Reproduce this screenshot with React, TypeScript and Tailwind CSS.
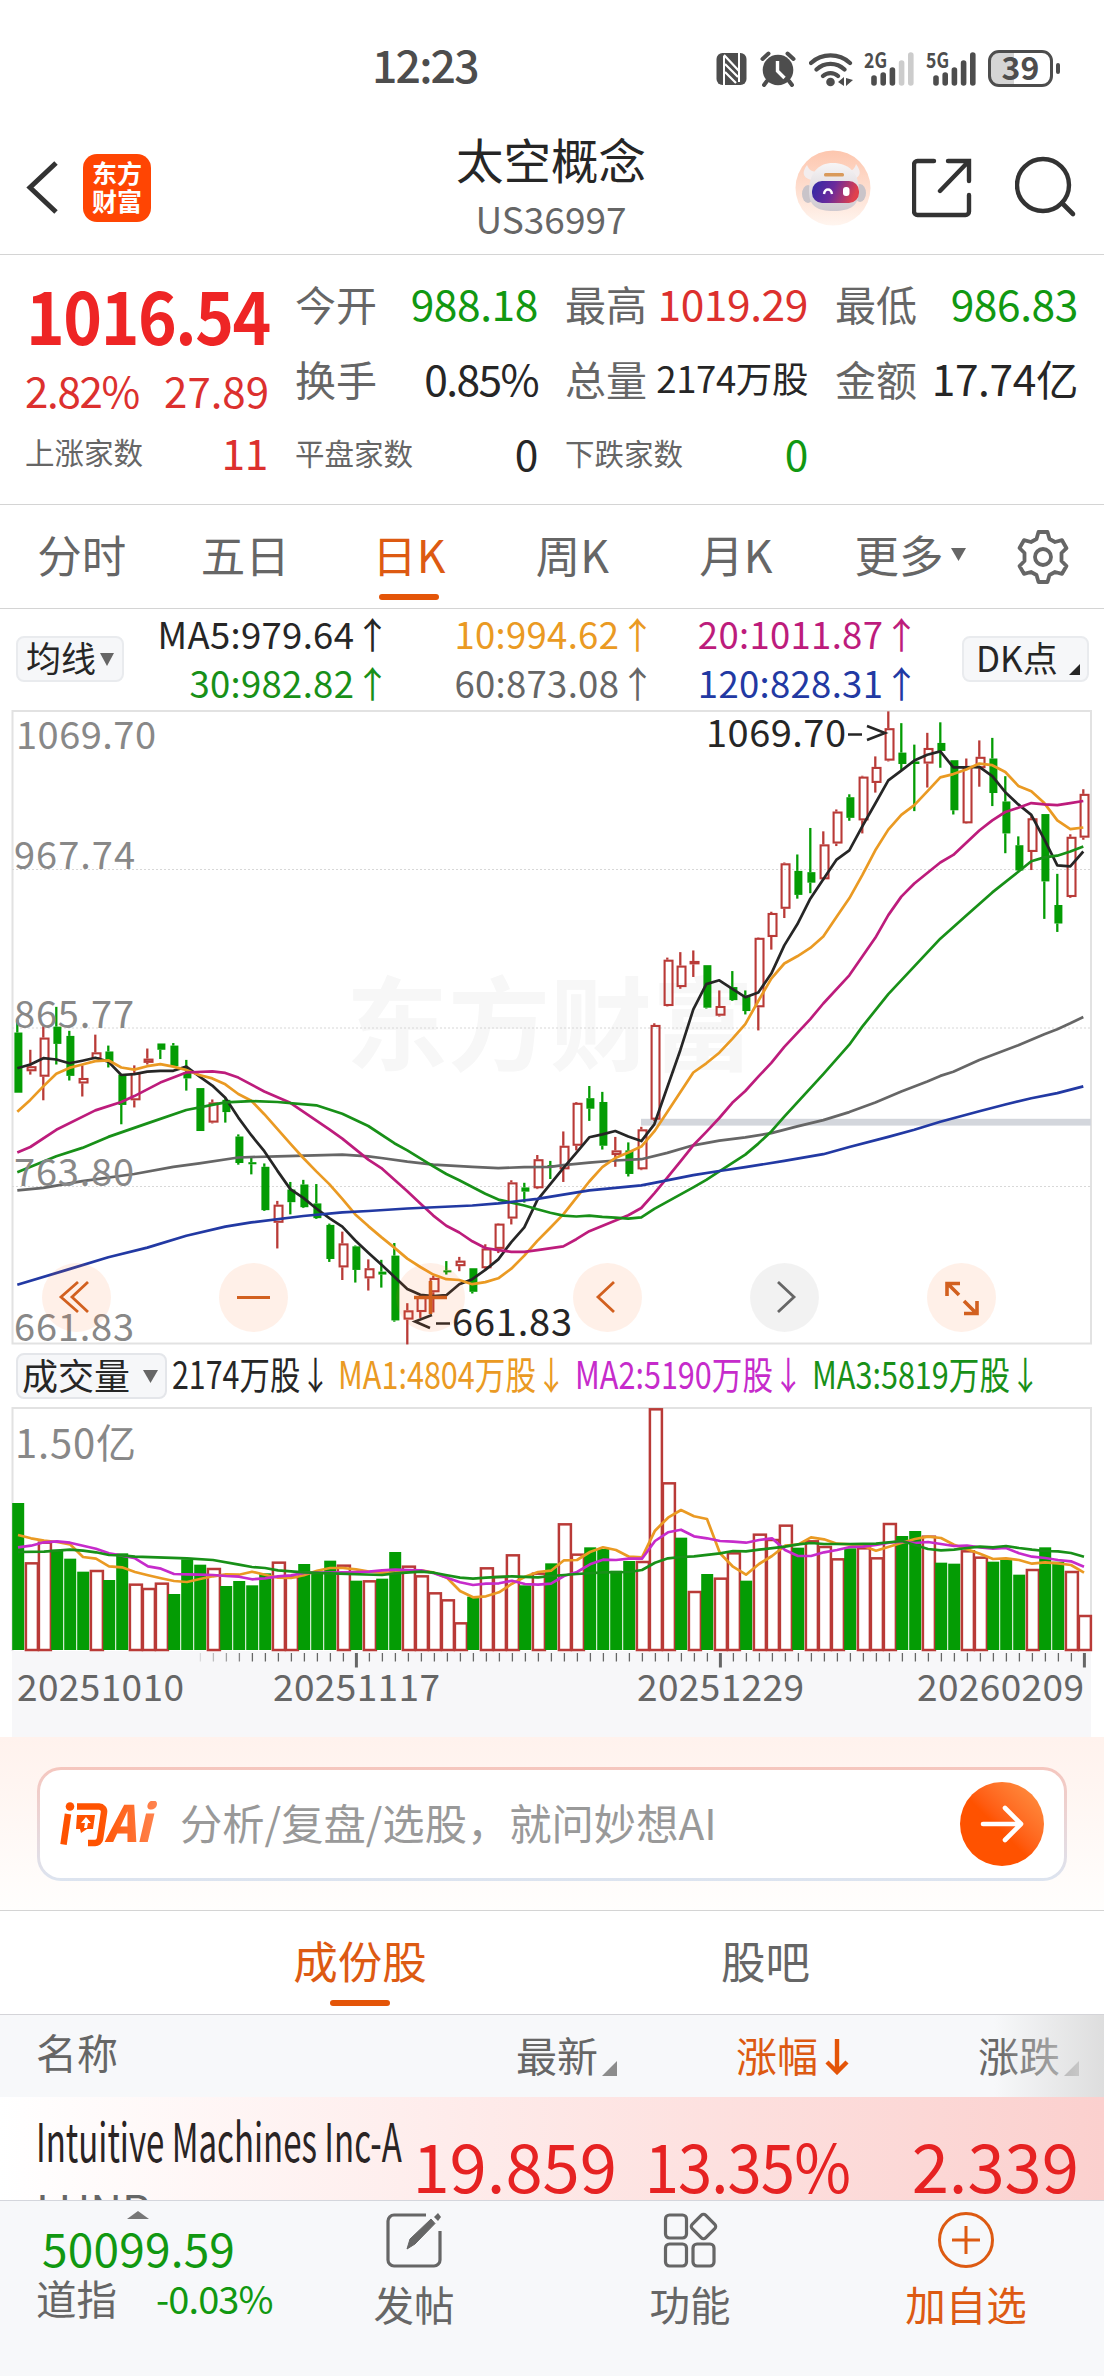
import React from 'react';

// --- Types ---
// [up?, high, body top, body bottom, low], measured on a 1568 unit tall grid
type Candle = [number, number, number, number, number];
type Point = [number, number];

// --- Data ---
const candles: Candle[] = [
  [0, 760, 790, 933, 933], [1, 831, 870, 882, 890], [1, 775, 802, 895, 951], [0, 729, 776, 817, 866],
  [0, 786, 798, 893, 904], [1, 868, 898, 911, 942], [1, 795, 837, 853, 853], [0, 821, 835, 860, 873],
  [0, 890, 890, 962, 1008], [1, 868, 886, 951, 968], [1, 828, 852, 862, 866], [0, 816, 816, 831, 853],
  [0, 815, 821, 870, 870], [0, 855, 885, 899, 928], [0, 922, 922, 1024, 1024], [1, 949, 956, 1004, 1006],
  [0, 945, 950, 979, 1004], [0, 1032, 1037, 1100, 1104], [0, 1087, 1098, 1103, 1127], [0, 1101, 1109, 1212, 1214],
  [1, 1190, 1199, 1242, 1303], [0, 1145, 1163, 1193, 1222], [0, 1140, 1151, 1205, 1207], [0, 1150, 1196, 1231, 1233],
  [0, 1244, 1247, 1328, 1335], [1, 1263, 1291, 1348, 1378], [0, 1296, 1298, 1354, 1384], [1, 1329, 1350, 1374, 1403],
  [0, 1330, 1358, 1365, 1396], [0, 1290, 1320, 1474, 1477], [1, 1433, 1450, 1472, 1531], [1, 1412, 1418, 1454, 1468],
  [1, 1368, 1373, 1407, 1455], [0, 1333, 1355, 1359, 1365], [1, 1323, 1332, 1345, 1357], [0, 1350, 1350, 1406, 1410],
  [1, 1293, 1303, 1350, 1354], [1, 1243, 1244, 1304, 1314], [1, 1141, 1146, 1232, 1246], [0, 1147, 1158, 1168, 1194],
  [1, 1081, 1091, 1160, 1162], [0, 1095, 1105, 1108, 1138], [1, 1025, 1059, 1115, 1145], [1, 955, 957, 1059, 1070],
  [0, 917, 946, 971, 1000], [0, 931, 955, 1059, 1068], [1, 1038, 1070, 1081, 1109], [0, 1051, 1070, 1126, 1132],
  [1, 1014, 1020, 1115, 1117], [1, 768, 772, 997, 1000], [1, 612, 617, 727, 728], [1, 599, 631, 682, 686],
  [1, 595, 620, 628, 658], [0, 630, 630, 731, 733], [1, 690, 727, 750, 752], [0, 644, 682, 713, 715],
  [0, 690, 702, 739, 747], [1, 564, 565, 730, 785], [1, 503, 506, 563, 593], [1, 386, 388, 496, 518],
  [0, 367, 406, 463, 472], [0, 304, 409, 434, 459], [1, 312, 343, 426, 428], [1, 260, 265, 341, 347],
  [0, 224, 231, 280, 287], [1, 180, 182, 286, 317], [1, 134, 159, 197, 220], [1, 27, 67, 144, 146],
  [0, 55, 125, 152, 166], [0, 106, 146, 152, 264], [1, 78, 114, 151, 208], [0, 53, 102, 121, 161],
  [0, 143, 143, 262, 272], [1, 139, 158, 293, 294], [1, 96, 135, 162, 206], [0, 90, 139, 221, 252],
  [0, 181, 241, 317, 364], [0, 324, 345, 405, 406], [1, 276, 281, 361, 404], [0, 271, 271, 431, 520],
  [0, 413, 487, 531, 551], [1, 319, 325, 468, 470], [1, 212, 223, 327, 332],
];

const ma5 = [
  875, 866, 851, 854, 863, 857, 850, 859, 891, 889, 883, 881, 881, 871, 894, 916, 945, 992, 1034, 1072, 1118,
  1162, 1183, 1208, 1231, 1251, 1284, 1313, 1341, 1370, 1399, 1413, 1416, 1414, 1388, 1376, 1354, 1329, 1288,
  1253, 1188, 1150, 1112, 1076, 1039, 1032, 1024, 1037, 1048, 1008, 920, 832, 735, 675, 666, 686, 706, 695, 650,
  583, 533, 472, 426, 380, 357, 300, 246, 191, 168, 144, 130, 122, 160, 160, 159, 181, 219, 248, 273, 331, 393,
  395, 360,
];
const ma10 = [
  978, 950, 918, 888, 874, 866, 858, 856, 873, 878, 870, 865, 871, 879, 891, 899, 913, 936, 952, 984, 1019, 1054,
  1088, 1120, 1150, 1185, 1222, 1250, 1276, 1301, 1327, 1347, 1365, 1376, 1378, 1388, 1383, 1374, 1351, 1320,
  1285, 1254, 1222, 1183, 1144, 1110, 1088, 1075, 1061, 1025, 979, 932, 885, 863, 838, 805, 770, 715, 662, 626,
  609, 589, 562, 516, 471, 416, 357, 308, 273, 250, 217, 184, 176, 165, 151, 155, 171, 204, 217, 245, 286, 307,
  303,
];
const ma20: Point[] = [
  [0, 1075], [1, 1062], [3, 1021], [6, 975], [8, 955], [9, 941], [11, 909], [13, 885], [15, 882], [16, 886],
  [17, 897], [19, 930], [21, 957], [24, 1020], [25, 1042], [27, 1092], [28, 1112], [30, 1167], [31, 1196],
  [32, 1225], [33, 1249], [34, 1265], [35, 1286], [36, 1302], [37, 1307], [38, 1311], [39, 1311], [40, 1307],
  [42, 1298], [43, 1281], [44, 1262], [47, 1224], [48, 1207], [49, 1172], [50, 1135], [51, 1097], [52, 1058],
  [53, 1026], [54, 993], [55, 957], [56, 929], [57, 895], [58, 862], [59, 824], [61, 758], [62, 721], [64, 654],
  [66, 565], [67, 511], [68, 467], [69, 436], [71, 386], [72, 368], [73, 339], [74, 310], [75, 286], [76, 266],
  [77, 256], [78, 245], [79, 248], [80, 250], [81, 245], [82, 240],
];
const ma30: Point[] = [
  [0, 1122], [3, 1084], [5, 1064], [7, 1038], [10, 1006], [13, 974], [15, 962], [16, 956], [18, 953], [20, 955],
  [23, 963], [25, 983], [27, 1012], [29, 1053], [30, 1070], [32, 1108], [33, 1126], [34, 1141], [36, 1173],
  [37, 1187], [39, 1201], [40, 1210], [41, 1218], [42, 1225], [43, 1227], [44, 1225], [45, 1228], [46, 1230],
  [47, 1232], [48, 1229], [49, 1209], [52, 1158], [53, 1140], [54, 1120], [56, 1080], [57, 1054], [58, 1025],
  [59, 990], [62, 889], [64, 819], [65, 776], [67, 699], [69, 633], [71, 567], [73, 512], [75, 457], [77, 408],
  [78, 383], [79, 374], [80, 370], [81, 360], [82, 348],
];
const ma60: Point[] = [
  [0, 1165], [2, 1159], [5, 1143], [9, 1126], [12, 1109], [14, 1101], [17, 1087], [20, 1084], [25, 1080],
  [27, 1084], [28, 1088], [30, 1097], [32, 1104], [35, 1109], [37, 1112], [39, 1110], [41, 1109], [42, 1105],
  [44, 1099], [46, 1094], [48, 1091], [50, 1076], [52, 1058], [54, 1047], [56, 1039], [58, 1029], [60, 1013],
  [62, 998], [64, 979], [66, 956], [68, 930], [70, 906], [71, 893], [72, 883], [74, 855], [77, 820], [79, 794],
  [80, 782], [81, 768], [82, 753],
];
const ma120: Point[] = [
  [0, 1389], [4, 1352], [7, 1324], [10, 1301], [13, 1273], [16, 1251], [18, 1241], [22, 1226], [25, 1217],
  [27, 1214], [30, 1208], [35, 1201], [37, 1196], [40, 1185], [44, 1165], [48, 1153], [49, 1147], [52, 1129],
  [54, 1119], [56, 1110], [59, 1095], [62, 1079], [64, 1062], [67, 1038], [69, 1021], [71, 1002], [74, 977],
  [76, 961], [78, 946], [80, 934], [82, 918],
];

// [up?, bar top]
const volumes: Point[] = [
  [0, 489], [1, 667], [1, 605], [0, 629], [0, 656], [0, 695], [1, 690], [0, 720], [0, 640], [1, 731], [1, 744],
  [1, 728], [0, 762], [0, 658], [0, 674], [1, 684], [0, 738], [0, 723], [0, 736], [0, 700], [1, 665], [1, 708],
  [0, 672], [0, 698], [0, 662], [1, 674], [0, 722], [1, 721], [0, 716], [0, 636], [1, 677], [1, 706], [1, 757],
  [1, 778], [1, 847], [0, 770], [1, 682], [1, 708], [1, 643], [0, 736], [1, 698], [0, 670], [1, 550], [1, 641],
  [0, 622], [0, 627], [0, 692], [0, 663], [1, 663], [1, 205], [1, 427], [0, 593], [1, 753], [0, 702], [1, 713],
  [1, 637], [0, 722], [1, 581], [1, 597], [1, 554], [0, 623], [1, 601], [1, 618], [1, 655], [0, 625], [1, 622],
  [1, 652], [1, 549], [0, 588], [0, 573], [1, 587], [0, 668], [0, 671], [1, 631], [1, 650], [0, 665], [0, 659],
  [0, 704], [1, 687], [0, 622], [0, 665], [1, 693], [1, 825],
];
const vma1 = [
  585, 595, 602, 606, 613, 651, 656, 679, 682, 696, 706, 715, 723, 726, 717, 709, 703, 704, 695, 704, 713, 714,
  706, 692, 684, 684, 688, 695, 698, 697, 693, 691, 698, 713, 753, 772, 769, 757, 731, 710, 696, 692, 661, 660,
  636, 622, 630, 650, 652, 572, 533, 510, 529, 537, 640, 680, 704, 672, 648, 617, 614, 592, 598, 611, 613, 617,
  632, 620, 608, 597, 590, 594, 614, 628, 641, 657, 655, 660, 671, 667, 670, 675, 698,
];
const vma2 = [
  622, 617, 607, 604, 608, 617, 626, 640, 647, 655, 679, 686, 702, 703, 704, 705, 708, 710, 718, 715, 709, 706,
  699, 698, 698, 697, 696, 695, 691, 689, 690, 691, 700, 713, 727, 735, 731, 730, 722, 732, 734, 731, 708, 696,
  673, 659, 660, 656, 656, 603, 577, 569, 589, 595, 603, 605, 608, 600, 595, 630, 648, 648, 637, 630, 621, 620,
  615, 608, 605, 609, 606, 612, 618, 617, 622, 626, 624, 640, 650, 654, 660, 664, 680,
];
const vma3: Point[] = [
  [0, 636], [2, 635], [4, 629], [5, 632], [6, 637], [7, 645], [8, 646], [9, 650], [13, 655], [15, 660], [17, 674],
  [18, 681], [19, 684], [20, 691], [22, 697], [24, 700], [28, 705], [29, 700], [31, 695], [32, 698], [33, 706],
  [34, 713], [35, 716], [36, 713], [38, 709], [40, 712], [41, 708], [43, 702], [45, 697], [47, 696], [48, 690],
  [49, 668], [50, 655], [51, 651], [52, 649], [54, 640], [55, 633], [56, 634], [57, 629], [59, 620], [60, 613],
  [61, 609], [62, 612], [64, 612], [66, 611], [68, 603], [69, 615], [70, 627], [71, 631], [72, 629], [73, 624],
  [74, 620], [75, 622], [76, 618], [77, 624], [78, 629], [79, 633], [80, 634], [81, 639], [82, 650],
];

const RED = '#b93a37';
const GREEN = '#049c04';
const STEP = 13;

const priceY = (v: number) => (v * 660) / 1568;
const volumeY = (v: number) => v / 3;

const toPoints = (list: number[]): Point[] => list.map((v, i) => [i, v]);
const line = (pts: Point[], x0: number, y: (v: number) => number) =>
  pts.map(([i, v]) => `${x0 + i * STEP},${y(v).toFixed(1)}`).join(' ');

const priceLines = [
  { pts: ma60, color: '#666666' },
  { pts: toPoints(ma5), color: '#262626' },
  { pts: toPoints(ma10), color: '#ea9a23' },
  { pts: ma20, color: '#bd1c7c' },
  { pts: ma30, color: '#189018' },
  { pts: ma120, color: '#2239a3' },
];

// --- Status bar ---

const Signal: React.FC<{ label: string; strong: number }> = ({ label, strong }) => (
  <svg className="overflow-visible" width="51" height="36" viewBox="0 0 51 36">
    <text x="0" y="17" fontSize="21" fontWeight="700" fill="#4d4d4d" textLength="23" lengthAdjust="spacingAndGlyphs">{label}</text>
    {[24, 21, 16, 9, 1].map((y, i) => (
      <line key={i} x1={10 + i * 9.2} x2={10 + i * 9.2} y1={y + 3} y2="32" stroke={i < strong ? '#4d4d4d' : '#cccccc'} strokeWidth="5.6" strokeLinecap="round" />
    ))}
  </svg>
);

const StatusBar = () => (
  <div className="flex h-[137px] items-center text-[#4d4d4d]">
    <div className="ml-[372px] w-[344px] -mt-[8px] text-[44.5px] leading-none font-medium tracking-[-1.8px]">12:23</div>
    <div className="flex items-center">
      {/* NFC */}
      <svg className="mr-[12px]" width="32" height="34" viewBox="0 0 32 34">
        <rect x="0.5" y="1" width="30" height="32" rx="6" fill="#4d4d4d" />
        <path d="M8 4v29M23 1v29" stroke="#fff" strokeWidth="2" />
        <path d="M8 3L23 19M9 12L22 25M9 20L20 31" stroke="#fff" strokeWidth="2.200" />
      </svg>
      {/* Alarm */}
      <svg className="mr-[12px]" width="37" height="36" viewBox="0 0 37 36">
        <circle cx="18" cy="19" r="15.3" fill="#4d4d4d" />
        <path d="M2.500 8l6-5.500M33.500 8l-6-5.500M7 30l-3 4M29 30l3 4" stroke="#4d4d4d" strokeWidth="4" strokeLinecap="round" />
        <path d="M17.500 10v10l7 7" fill="none" stroke="#fff" strokeWidth="3.400" />
      </svg>
      {/* Wifi */}
      <svg className="mr-[10px]" width="45" height="36" viewBox="0 0 45 36">
        <path d="M2 12a29 29 0 0 1 39 0M7.500 18.500a20 20 0 0 1 28 0M14 25a11 11 0 0 1 15 0" fill="none" stroke="#4d4d4d" strokeWidth="4.200" strokeLinecap="round" />
        <circle cx="21.500" cy="31" r="4.300" fill="#4d4d4d" />
        <path d="M29 31l6-5v9zM37 27v8l7-6z" fill="#4d4d4d" />
      </svg>
      <div className="mr-[11px]"><Signal label="2G" strong={3} /></div>
      <div className="mr-[11px]"><Signal label="5G" strong={5} /></div>
      <div className="flex h-[37px] w-[65px] items-center justify-center rounded-[11px] border-[3px] border-[#4d4d4d] bg-linear-to-r from-[#d5d5d5] from-39% to-white to-39%">
        <span className="-mt-[5px] text-[32px] leading-none font-bold">39</span>
      </div>
      <div className="ml-[3px] h-[11px] w-[4px] rounded-full bg-[#4d4d4d]" />
    </div>
  </div>
);

// --- Header ---

const Robot = () => (
  <svg width="76" height="76" viewBox="0 0 76 76">
    <defs>
      <linearGradient id="halo" x1="0" y1="0" x2="0" y2="1">
        <stop offset="0" stopColor="#fdc6ae" />
        <stop offset="1" stopColor="#fff5ef" />
      </linearGradient>
      <linearGradient id="visor" x1="0" y1="0" x2="1" y2="0.2">
        <stop offset="0" stopColor="#2f2aa6" />
        <stop offset="0.5" stopColor="#6a2a9c" />
        <stop offset="1" stopColor="#e0404c" />
      </linearGradient>
      <linearGradient id="shell" x1="0" y1="0" x2="0" y2="1">
        <stop offset="0" stopColor="#f7f5f6" />
        <stop offset="1" stopColor="#cfc9cf" />
      </linearGradient>
    </defs>
    <circle cx="38" cy="38" r="37.5" fill="url(#halo)" />
    <path d="M12 15c-5 7-5 12 4 15l7-8c-6 0-9-2-11-7zM61 14c5 7 6 12-3 16l-8-8c6 0 10-3 11-8z" fill="#f3edee" />
    <ellipse cx="13" cy="44" rx="6" ry="9" fill="#c9c4c9" />
    <ellipse cx="65" cy="43" rx="6" ry="9" fill="#c9c4c9" />
    <path d="M14 42c0-19 9-29 24-29s26 9 26 28c0 14-8 20-25 20S14 56 14 42z" fill="url(#shell)" />
    <rect x="17" y="31" width="47" height="22" rx="10" fill="url(#visor)" />
    <rect x="29" y="23" width="20" height="3.500" rx="1.500" fill="#d99a5b" />
    <path d="M29 44c1-6 7-6 8 0" fill="none" stroke="#fff" strokeWidth="2.400" />
    <rect x="48" y="37" width="6.500" height="9" rx="3" fill="#fff" />
  </svg>
);

const Header = () => (
  <div className="flex h-[118px] items-start border-b border-[#d4d4d4]">
    <svg className="mt-[22px] ml-[26px]" width="33" height="58" viewBox="0 0 33 58">
      <path d="M30 4L4 28.500L30 53" fill="none" stroke="#333" strokeWidth="5" />
    </svg>
    <div className="mt-[17px] ml-[24px] flex h-[68px] w-[68px] flex-col items-center justify-center rounded-[14px] bg-[#ff4503] text-[25px] leading-[28px] font-bold text-white">
      <span className="-mt-[4px]">东方</span>
      <span>财富</span>
    </div>
    <div className="ml-[250px] flex w-[300px] flex-col items-center">
      <div className="-mt-[1px] text-[47.500px] leading-[46px] text-[#262626]">太空概念</div>
      <div className="mt-[18px] text-[37px] leading-[37px] text-[#666]">US36997</div>
    </div>
    <div className="mt-[13px] ml-[94px]"><Robot /></div>
    <svg className="mt-[21px] ml-[41px]" width="60" height="60" viewBox="0 0 60 60">
      <path d="M22 3H5.500A3.500 3.500 0 0 0 2 6.500v47A3.500 3.500 0 0 0 5.500 57h48a3.500 3.500 0 0 0 3.500-3.500V37M36 3h21v20M56 4L28 33" fill="none" stroke="#333" strokeWidth="4.400" strokeLinecap="round" />
    </svg>
    <svg className="mt-[19px] ml-[43px]" width="62" height="62" viewBox="0 0 62 62">
      <circle cx="28" cy="29" r="26" fill="none" stroke="#333" strokeWidth="4.400" />
      <path d="M47 47L58 58" stroke="#333" strokeWidth="4.600" strokeLinecap="round" />
    </svg>
  </div>
);

// --- Quote panel ---

const Cell: React.FC<{ label: string; value: string; color: string; small?: boolean; tight?: boolean }> = ({
  label,
  value,
  color,
  small,
  tight,
}) => (
  <div className="flex h-[50px] w-[243px] items-center justify-between whitespace-nowrap">
    <span className={`text-[#666] ${small ? 'text-[29.500px]' : 'text-[41px]'} leading-none`}>{label}</span>
    <span className={`${color} ${tight ? 'text-[36.500px]' : 'text-[42.500px]'} leading-none ${value.endsWith('%') ? 'tracking-[-1.6px]' : 'tracking-[-0.4px]'}`}>{value}</span>
  </div>
);

const QuotePanel = () => (
  <div className="flex h-[250px] border-b border-[#d4d4d4] pl-[25px]">
    <div className="w-[244px] text-[#dc302e]">
      <div className="mt-[22px] ml-[1px] w-max origin-left scale-x-[0.9] text-[73px] leading-[72px] font-bold tracking-[-1.6px] text-[#ee2525]">1016.54</div>
      <div className="mt-[20px] flex justify-between text-[42px] leading-[42px]">
        <span className="tracking-[-1.3px]">2.82%</span>
        <span>27.89</span>
      </div>
      <div className="mt-[16px]"><Cell label="上涨家数" value="11" color="text-[#dc302e]" small /></div>
    </div>
    <div className="ml-[26px] grid grid-cols-[243px_243px_243px] gap-x-[27px] content-start pt-[23px]">
      <Cell label="今开" value="988.18" color="text-[#119811]" />
      <Cell label="最高" value="1019.29" color="text-[#dc302e]" />
      <Cell label="最低" value="986.83" color="text-[#119811]" />
      <div className="mt-[25px]"><Cell label="换手" value="0.85%" color="text-[#262626]" /></div>
      <div className="mt-[25px]"><Cell label="总量" value="2174万股" color="text-[#262626]" tight /></div>
      <div className="mt-[25px]"><Cell label="金额" value="17.74亿" color="text-[#262626]" /></div>
      <div className="mt-[25px]"><Cell label="平盘家数" value="0" color="text-[#262626]" small /></div>
      <div className="mt-[25px]"><Cell label="下跌家数" value="0" color="text-[#119811]" small /></div>
    </div>
  </div>
);

// --- Period tabs ---

const periods = ['分时', '五日', '日K', '周K', '月K'];

const PeriodTabs = () => (
  <div className="flex h-[104px] items-start border-b border-[#d4d4d4] text-[44.500px] leading-[44px] text-[#666]">
    {periods.map((p) => (
      <div key={p} className={`flex w-[163.500px] flex-col items-center pt-[27px] ${p === '日K' ? 'text-[#dd5a12]' : ''}`}>
        <span>{p}</span>
        {p === '日K' && <span className="mt-[18px] h-[6px] w-[60px] rounded-[3px] bg-[#e45508]" />}
      </div>
    ))}
    <div className="flex w-[150px] items-center pt-[27px] pl-[37px] whitespace-nowrap">
      更多
      <svg className="ml-[7px]" width="15" height="13" viewBox="0 0 15 13"><path d="M0 0h15L7.500 13z" fill="#666" /></svg>
    </div>
    <svg className="mt-[25px] ml-[49px]" width="52" height="54" viewBox="0 0 52 54">
      <path
        d="M21.500 2h9l2 7 5.500 3 7-1.800 4.500 8L44.500 23v8l5 5-4.500 7.800-7-1.800-5.500 3-2 7h-9l-2-7-5.500-3-7 1.800L2.500 36l5-5v-8l-5-5 4.500-7.800 7 1.800 5.500-3z"
        fill="none"
        stroke="#666"
        strokeWidth="3.800"
        strokeLinejoin="round"
      />
      <circle cx="26" cy="27" r="8" fill="none" stroke="#666" strokeWidth="3.800" />
    </svg>
  </div>
);

// --- MA legend ---

const MaLegend = () => (
  <div className="flex h-[99px]">
    <div className="mt-[27px] ml-[16px] flex h-[46px] w-[108px] items-center rounded-[8px] border-2 border-[#e9ebee] bg-[#f6f7f9] pl-[8px] text-[35px] leading-[35px] whitespace-nowrap text-[#262626]">
      <span className="-mt-[5px]">均线</span>
      <svg className="ml-[4px]" width="14" height="14" viewBox="0 0 14 14"><path d="M0 1h14L7 14z" fill="#666" /></svg>
    </div>
    <div className="grid grid-cols-[267px_265px_264px] content-start pt-[6px] text-right text-[36.500px] leading-[49px] tracking-[0.3px] whitespace-nowrap">
      <span className="-mt-[6px] text-[#262626]">MA5:979.64↑</span>
      <span className="-mt-[6px] text-[#ea9a23]">10:994.62↑</span>
      <span className="-mt-[6px] text-[#bd1c7c]">20:1011.87↑</span>
      <span className="text-[#189018]">30:982.82↑</span>
      <span className="text-[#666]">60:873.08↑</span>
      <span className="text-[#2239a3]">120:828.31↑</span>
    </div>
    <div className="mt-[27px] ml-[42px] flex h-[46px] w-[127px] items-center rounded-[8px] border-2 border-[#e9ebee] bg-[#f6f7f9] pl-[12px] text-[35px] leading-[35px] whitespace-nowrap text-[#262626]">
      <span className="-mt-[5px]">DK点</span>
      <svg className="mt-[20px] ml-[11px] shrink-0" width="11" height="11" viewBox="0 0 11 11"><path d="M11 0v11H0z" fill="#262626" /></svg>
    </div>
  </div>
);

// --- Price chart ---

const tools = [
  <path key="rewind" d="M36 19L19 34l17 15M46 19L30 34l16 15" />,
  <path key="minus" d="M18 34.500h33" />,
  <path key="plus" d="M18 34.500h33M34.500 18v33" strokeWidth="3.600" />,
  <path key="prev" d="M41 19L25 34l16 15" />,
  <path key="next" d="M28 19l16 15-16 15" />,
  <path key="expand" d="M20 33V20.500h13M21 21l11 11M37 38l12 12M50 38v12.500H37" strokeWidth="3.600" />,
];

const PriceChart = () => (
  <div className="relative h-[640px]">
    <svg className="block" width="1104" height="640" viewBox="0 8 1104 640">
      <g fill="#f7f7f7" fontSize="102" fontWeight="700">
        <text x="346" y="363" textLength="408">东方财富</text>
      </g>
      <rect x="12.500" y="11" width="1078.500" height="632.500" fill="none" stroke="#e2e2e2" strokeWidth="2" />
      {[169.5, 328, 486.5].map((y) => (
        <line key={y} x1="12" x2="1091" y1={y} y2={y} stroke="#d8d8d8" strokeWidth="1.200" strokeDasharray="2 2" />
      ))}
      <rect x="641" y="418.800" width="450" height="6.800" fill="#d3d6dc" />
      {candles.map(([up, high, top, bottom, low], i) => {
        const x = 17.3 + i * STEP;
        const color = up ? RED : GREEN;
        const h = Math.max(priceY(bottom - top), 2);
        return (
          <g key={i}>
            <line x1={x} x2={x} y1={priceY(high)} y2={priceY(top)} stroke={color} strokeWidth="2.300" />
            <line x1={x} x2={x} y1={priceY(bottom)} y2={priceY(low)} stroke={color} strokeWidth="2.300" />
            {up ? (
              <rect x={x - 2.7} y={priceY(top) + 1} width="7.900" height={Math.max(h - 2, 1)} fill="none" stroke={RED} strokeWidth="2.100" />
            ) : (
              <rect x={x - 2.9} y={priceY(top)} width="8" height={h} fill={GREEN} />
            )}
          </g>
        );
      })}
      {priceLines.map((l) => (
        <polyline key={l.color} points={line(l.pts, 17.3, priceY)} fill="none" stroke={l.color} strokeWidth="2.700" strokeLinejoin="round" />
      ))}
      <g fill="#888888" fontSize="38">
        <text x="16" y="49" textLength="140">1069.70</text>
        <text x="14" y="169" textLength="121">967.74</text>
        <text x="14" y="328" textLength="120">865.77</text>
        <text x="14" y="486" textLength="120">763.80</text>
        <text x="14" y="641" textLength="120">661.83</text>
      </g>
      <g fill="#262626" fontSize="38">
        <text x="706" y="47" textLength="140">1069.70</text>
        <path d="M848 34.500h14M867 26l18 7-18 7M430 628l-15-6.500 17-6.500M436 623.500h14" fill="none" stroke="#262626" strokeWidth="2.600" />
        <text x="452" y="635.500" textLength="120">661.83</text>
      </g>
    </svg>
    <div className="absolute top-[555px] left-[42px] flex gap-[108.100px]">
      {tools.map((icon, i) => (
        <svg
          key={i}
          className={`h-[69px] w-[69px] rounded-full ${i === 4 ? 'bg-black/5' : 'bg-[#fb6a20]/10'}`}
          viewBox="0 0 69 69"
          fill="none"
          stroke={i === 4 ? '#666666' : '#d2601f'}
          strokeWidth="2.800"
        >
          {icon}
        </svg>
      ))}
    </div>
  </div>
);

// --- Volume ---

const volumeLegend = [
  { text: 'MA1:4804万股↓', color: 'text-[#ea9a23]' },
  { text: 'MA2:5190万股↓', color: 'text-[#c62bcb]' },
  { text: 'MA3:5819万股↓', color: 'text-[#189018]' },
];

const VolumeLegend = () => (
  <div className="flex h-[56px] items-start text-[38px] leading-[38px] whitespace-nowrap">
    <div className="mt-[5px] ml-[16px] flex h-[46px] w-[151px] items-center rounded-[8px] border-2 border-[#e4e6ea] bg-[#f6f7f9] pl-[4px] text-[36px] leading-[36px] text-[#262626]">
      <span className="-mt-[5px]">成交量</span>
      <svg className="ml-[13px]" width="15" height="13" viewBox="0 0 15 13"><path d="M0 0h15L7.500 13z" fill="#666" /></svg>
    </div>
    <div className="mt-[6px] ml-[5px] w-[166px]">
      <span className="inline-block origin-left scale-x-[0.8] text-[#262626]">2174万股↓</span>
    </div>
    {volumeLegend.map((item) => (
      <div key={item.text} className="mt-[6px] w-[237px]">
        <span className={`inline-block origin-left scale-x-[0.805] ${item.color}`}>{item.text}</span>
      </div>
    ))}
  </div>
);

const VolumeChart = () => (
  <svg className="block" width="1104" height="333" viewBox="0 64 1104 333">
    <rect x="12" y="311" width="1079" height="86" fill="#f7f7f9" />
    <path d="M12.500 311V68h1078.500V311" fill="none" stroke="#e2e2e2" strokeWidth="2" />
    {volumes.map(([up, top], i) => {
      const x = 12 + i * STEP;
      const y = volumeY(top);
      return up ? (
        <rect key={i} x={x + 0.9} y={y + 1} width="12" height={309 - y} fill="#fff" stroke={RED} strokeWidth="2.500" />
      ) : (
        <rect key={i} x={x + 0.2} y={y} width="12" height={310 - y} fill={GREEN} />
      );
    })}
    <g fill="none" strokeWidth="2.700" strokeLinejoin="round">
      <polyline points={line(toPoints(vma1), 18, volumeY)} stroke="#ea9a23" />
      <polyline points={line(toPoints(vma2), 18, volumeY)} stroke="#c62bcb" />
      <polyline points={line(vma3, 18, volumeY)} stroke="#189018" />
    </g>
    {candles.map((_, i) => {
      const major = i === 26 || i === 54 || i === 82;
      const x = 18.4 + i * STEP;
      return i < 14 ? null : (
        <line
          key={i}
          x1={x}
          x2={x}
          y1="313"
          y2={major ? 327.5 : 321.5}
          stroke="#666"
          strokeOpacity={i < 18 ? (i - 13) / 5 : 1}
          strokeWidth={major ? 3 : 1.3}
        />
      );
    })}
    <text x="15" y="118" fontSize="40" fill="#888888" textLength="121">1.50亿</text>
    <g fill="#666666" fontSize="37">
      <text x="17" y="361" textLength="167">20251010</text>
      <text x="273" y="361" textLength="167">20251117</text>
      <text x="637" y="361" textLength="167">20251229</text>
      <text x="917" y="361" textLength="167">20260209</text>
    </g>
  </svg>
);

// --- AI search box ---

const AskAi = () => (
  <div className="h-[174px] border-b border-[#d4d4d4] bg-linear-to-b from-[#fff2ed] to-[#fffefd] px-[37px] pt-[30px]">
    <div className="h-[114px] rounded-[24px] bg-linear-to-b from-[#f5c6be] to-[#dce4f0] p-[3px]">
      <div className="flex h-full items-center rounded-[21px] bg-white pr-[20px] pl-[20px]">
        <svg width="98" height="46" viewBox="0 0 98 46">
          <defs>
            <linearGradient id="ask" x1="0" y1="0" x2="98" y2="0" gradientUnits="userSpaceOnUse">
              <stop offset="0.4" stopColor="#ff5200" />
              <stop offset="1" stopColor="#ff8551" />
            </linearGradient>
          </defs>
          <g fill="none" stroke="url(#ask)" strokeWidth="6.500" strokeLinejoin="round">
            <path d="M8 13L3.500 43.500" />
            <path d="M17 5.500h22a5 5 0 0 1 5 6L40 38a5 5 0 0 1-5 4h-7" />
          </g>
          <circle cx="10" cy="5.500" r="4.300" fill="#ff5200" />
          <path d="M17 14h18l-2 14h-6l-6 4-1-4h-4z" fill="#ff5200" />
          <path d="M26 16l5 6h-3l-1 5h-3l1-5h-4z" fill="#fff" />
          <text x="45" y="41" fontSize="50" fontWeight="900" fontStyle="italic" fill="url(#ask)" textLength="46" lengthAdjust="spacingAndGlyphs">Ai</text>
        </svg>
        <div className="-mt-[4px] ml-[22px] flex-1 text-[42.300px] leading-[42px] whitespace-nowrap text-[#999]">分析/复盘/选股，就问妙想AI</div>
        <div className="flex h-[84px] w-[84px] items-center justify-center rounded-full bg-linear-to-tr from-[#ff5200] from-45% to-[#ff9545]">
          <svg width="44" height="38" viewBox="0 0 44 38">
            <path d="M3 19h37M25 3l16 16-16 16" fill="none" stroke="#fff" strokeWidth="4.600" strokeLinecap="round" strokeLinejoin="round" />
          </svg>
        </div>
      </div>
    </div>
  </div>
);

// --- Constituents ---

const Corner = () => (
  <svg className="mt-[28px] ml-[4px]" width="15" height="15" viewBox="0 0 15 15"><path d="M15 0v15H0z" fill="#8c8c8c" /></svg>
);

const Constituents = () => (
  <>
    <div className="flex h-[104px] border-b border-[#d4d4d8] pl-[156px] text-[44.500px] leading-[44px]">
      <div className="flex w-[408px] flex-col items-center pt-[27px] text-[#dd5a12]">
        成份股
        <span className="mt-[18px] h-[6px] w-[60px] rounded-[3px] bg-[#e45508]" />
      </div>
      <div className="flex w-[403px] flex-col items-center pt-[27px] text-[#666]">股吧</div>
    </div>
    <div className="relative flex h-[82px] items-center bg-[#f7f8fa] pb-[4px] text-[41px] leading-[40px] text-[#666]">
      <span className="ml-[36px] w-[480px] -mt-[6px]">名称</span>
      <div className="flex w-[220px] items-center">最新<Corner /></div>
      <div className="flex w-[242px] items-center text-[#dd5a12]">
        涨幅
        <svg className="mt-[5px] ml-[7px]" width="24" height="36" viewBox="0 0 24 36">
          <path d="M12 0v33M2 23l10 10 10-10" fill="none" stroke="#e45508" strokeWidth="4.400" />
        </svg>
      </div>
      <div className="flex items-center">涨跌<Corner /></div>
      {/* scroll hint over the last column */}
      <div className="absolute top-0 right-0 h-full w-[110px] bg-linear-to-r from-[#f7f8fa]/0 to-[#dcdcdc]/95" />
    </div>
    <div className="flex h-[103px] overflow-hidden bg-linear-to-r from-white to-[#fbd0ce] whitespace-nowrap">
      <div className="w-[379px] pl-[36px]">
        <div className="mt-[16px] w-max origin-left scale-x-[0.623] text-[53px] leading-[53px] text-[#2a2424]">Intuitive Machines Inc-A</div>
        <div className="mt-[20px] text-[44px] leading-[44px] text-[#666]">LUNR</div>
      </div>
      <div className="mt-[34px] w-[238px] text-right text-[67px] leading-[66px] text-[#e62222]">19.859</div>
      <div className="mt-[34px] w-[233px] origin-right scale-x-[0.92] text-right text-[67px] leading-[66px] tracking-[-1px] text-[#e62222]">13.35%</div>
      <div className="mt-[34px] w-[229px] text-right text-[67px] leading-[66px] text-[#e62222]">2.339</div>
    </div>
  </>
);

// --- Bottom bar ---

const BottomBar = () => (
  <div className="flex h-[176px] border-t border-[#d4d6dc] bg-[#f7f8fa] text-[40.500px] leading-[40px] text-[#666]">
    <div className="w-[300px] pt-[10px]">
      <svg className="ml-[127px]" width="22" height="8" viewBox="0 0 22 8"><path d="M0 8L11 0l11 8z" fill="#777" /></svg>
      <div className="mt-[5px] ml-[42px] text-[46px] leading-[46px] tracking-[0.2px] text-[#119811]">50099.59</div>
      <div className="mt-[8px] ml-[36px] flex items-center">
        <span>道指</span>
        <span className="ml-[39px] text-[38px] tracking-[-0.9px] text-[#119811]">-0.03%</span>
      </div>
    </div>
    <div className="flex w-[228px] flex-col items-center pt-[10px]">
      <svg width="58" height="58" viewBox="0 0 58 58" fill="none" stroke="#666">
        <path d="M41 4H9a6 6 0 0 0-6 6v39a6 6 0 0 0 6 6h40a6 6 0 0 0 6-6V20" strokeWidth="3.200" />
        <path d="M22 38l3-10L46 8l4 4.500L30 33z" fill="#666" strokeWidth="1" />
        <path d="M49 6l4-4 3 4-3 4z" fill="#666" stroke="none" />
      </svg>
      <span className="mt-[15px]">发帖</span>
    </div>
    <div className="flex w-[324px] flex-col items-center pt-[10px]">
      <svg width="56" height="58" viewBox="0 0 56 58" fill="none" stroke="#666" strokeWidth="3.200">
        <rect x="3.500" y="4" width="21" height="23" rx="4" />
        <rect x="3.500" y="33" width="21" height="22" rx="4" />
        <rect x="31" y="33" width="21" height="22" rx="4" />
        <rect x="32" y="6" width="19" height="19" rx="3" transform="rotate(45 41.500 15.500)" />
      </svg>
      <span className="mt-[15px]">功能</span>
    </div>
    <div className="flex w-[228px] flex-col items-center pt-[10px] text-[#dd5a12]">
      <svg width="58" height="58" viewBox="0 0 58 58" fill="none" stroke="#dd5a12" strokeWidth="3">
        <circle cx="29" cy="29" r="26.500" />
        <path d="M15 29h28M29 15v28" />
      </svg>
      <span className="mt-[15px]">加自选</span>
    </div>
  </div>
);

const App: React.FC = () => (
  <div className="h-[2376px] w-[1104px] overflow-hidden bg-white font-['Noto_Sans_CJK_SC','Noto_Sans',sans-serif]">
    <StatusBar />
    <Header />
    <QuotePanel />
    <PeriodTabs />
    <MaLegend />
    <PriceChart />
    <VolumeLegend />
    <VolumeChart />
    <AskAi />
    <Constituents />
    <BottomBar />
  </div>
);

export default App;
